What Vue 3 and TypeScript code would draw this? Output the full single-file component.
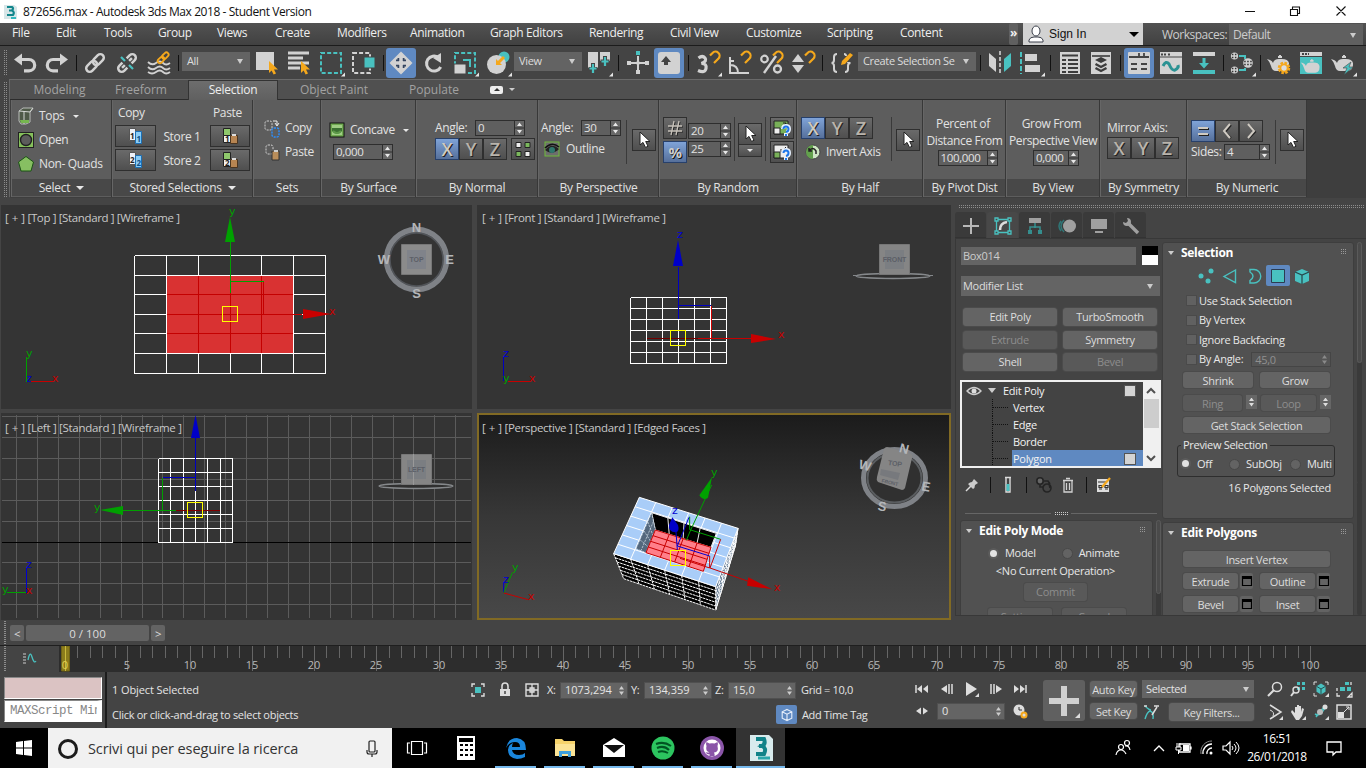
<script setup lang="ts">
import { h } from 'vue'

const G = '#d2d2d2'
const T = '#49c1c0'
const Y = '#f5a81c'

const magnet = `<path d="M0-6.500L2.500-9a4 4 0 0 1 6 5.500L4 1" fill="none" stroke="${Y}" stroke-width="2.200"/>`
const pot = `<path d="M-12-4q5 1 6 4 1-4 6-4h3q6 0 7 4v2q0 5-5 6h-8q-4 0-5-5-1-4-4-7z" fill="${G}"/><path d="M-1-6h4M1-8v2" stroke="${G}" stroke-width="2"/>`
const corner = `<path d="M14 9.500V13.500H10z" fill="#e6e6e6"/>`
const cubeN = `<path d="M0-7L6-4V4L0 7-6 4V-4zM-6-4L0-1 6-4M0-1V7"/>`
const ball = (x: number, y: number, r: number) => `<circle cx="${x}" cy="${y}" r="${r}" fill="${G}"/><path d="M${x - r + 1} ${y - 1.500}h${2 * r - 2}M${x - r + 1} ${y + 1.500}h${2 * r - 2}" stroke="#333" stroke-width="1.500" stroke-dasharray="1.500 1.500"/>`

const icons: Record<string, string> = {
  app: `<path d="M-6-7h10l3 2V7H-6z" fill="#d7e6e8"/><path d="M-3-5h5q2 1 0 3.500Q5 0 3 3H-3M-1-1.500h3" fill="none" stroke="#12868c" stroke-width="2.200"/><path d="M1 6h5" stroke="#35b9bd" stroke-width="2"/>`,
  undo: `<path d="M-5-3.500H4a5.700 5.700 0 0 1 0 11.400H-1" fill="none" stroke="${G}" stroke-width="3.200"/><path d="M-11-3.500L-3-9.500V2.500z" fill="${G}"/>`,
  redo: `<path d="M5-3.500H-4a5.700 5.700 0 0 0 0 11.400H1" fill="none" stroke="${G}" stroke-width="3.200"/><path d="M11-3.500L3-9.500V2.500z" fill="${G}"/>`,
  link: `<g transform="rotate(-45)" fill="none" stroke="${G}" stroke-width="2.500"><rect x="-11" y="-3.500" width="12.500" height="7" rx="3.500"/><rect x="-1.500" y="-3.500" width="12.500" height="7" rx="3.500"/></g>`,
  unlink: `<g transform="rotate(-45)" fill="none" stroke="${G}" stroke-width="2.500"><path d="M-3-3.500h-4.500a3.500 3.500 0 0 0 0 7H-3M3-3.500h4.500a3.500 3.500 0 0 1 0 7H3M-3 0H-7M3 0H7"/></g><path d="M-6-6l4 4M2 2l4 4" stroke="${T}" stroke-width="2.200"/>`,
  bind: `<path d="M-11-1q4 4 8 1t7 0 7 0M-11 4q4 4 8 1t7 0 7 0M-11 9q4 3 8 0t7 0 7 0" fill="none" stroke="${G}" stroke-width="1.800"/><g transform="translate(4 -5) rotate(-45)" fill="none" stroke="${Y}" stroke-width="1.800"><rect x="-6.500" y="-2.200" width="7.500" height="4.400" rx="2.200"/><rect x="-.5" y="-2.200" width="7.500" height="4.400" rx="2.200"/></g>`,
  select: `<path d="M-10-11H8V7H-10z" fill="${G}"/><path d="M3-2V10l2.600-2.400 2 4 2.400-1.200-2-3.800H12z" fill="${Y}"/>`,
  byname: `<path d="M-10-10H11M-10-5H5M-10 0H11M-10 5H2" stroke="${G}" stroke-width="3"/><path d="M3-2V10l2.600-2.400 2 4 2.400-1.200-2-3.800H12z" fill="${Y}"/>`,
  rect: `<rect x="-10" y="-10" width="20" height="20" fill="none" stroke="${T}" stroke-width="2" stroke-dasharray="4 2.150"/>${corner}`,
  window: `<rect x="-11" y="-10" width="17" height="20" fill="none" stroke="${G}" stroke-width="2" stroke-dasharray="4 2.100"/><path d="M0-6H11V5H0z" fill="${T}" stroke="#444"/>`,
  move: `<path d="M0-11.500L11.500 0 0 11.500-11.500 0z" fill="${G}"/><path d="M-3.500-3.500h2M-3.500-3.500v2M3.500-3.500h-2M3.500-3.500v2M-3.500 3.500h2M-3.500 3.500v-2M3.500 3.500h-2M3.500 3.500v-2" stroke="#33445f" stroke-width="3"/><path d="M0-10V10M-10 0H10" stroke="${G}" stroke-width="3"/>`,
  rotate: `<path d="M5.500-5.500A7.500 7.500 0 1 0 7.700 4" fill="none" stroke="${G}" stroke-width="3"/><path d="M0-5L8-10V0z" fill="${G}"/>`,
  scale: `<rect x="-10" y="-10" width="20" height="20" fill="none" stroke="${T}" stroke-width="2" stroke-dasharray="4 2.150"/><path d="M-11 1H1V11H-11z" fill="${G}" stroke="#444"/><path d="M-2-3H5V4" fill="none" stroke="${T}" stroke-width="2"/>${corner}`,
  place: `<circle cx="6" cy="-6" r="5.500" fill="${T}"/><circle cx="-1.500" cy="1.500" r="9.500" fill="${G}"/><path d="M6-6L0 0" stroke="${Y}" stroke-width="3"/><path d="M-2 2v-6l6 6z" fill="${Y}"/>${corner}`,
  pivot: `<path d="M-11-11H-1V5H-11zM1-11H11V-2H1z" fill="${G}"/><path d="M-6 0V11M-10.500 6H-1.500M6-7V4M1.500-1.500H10.500" stroke="#444" stroke-width="4"/><path d="M-6 1V10M-9.500 5.500H-2.500M6-6V3M2.500-1.500H9.500" stroke="${T}" stroke-width="2.200"/>${corner}`,
  manip: `<path d="M-2-12H2V-8H-2z" fill="${T}"/><path d="M0-7V11M-11 0H11" stroke="${G}" stroke-width="2"/><path d="M-11-2h4v4h-4zM7-2h4v4H7zM-2 7H2v4H-2zM-1.500-1.500h3v3h-3z" fill="${G}"/>`,
  keyb: `<rect x="-11" y="-11" width="22" height="22" rx="3" fill="${G}"/><path d="M-3-7L2-1H-1V2H-5V-1H-8z" fill="#444"/>`,
  snap: `<path d="M-9.500-5Q-5.500-8-3-5T-6.500.500Q-1 .500-2 5.500T-10 7.500" fill="none" stroke="${G}" stroke-width="3.200"/><g transform="translate(2 -1)">${magnet}</g>${corner}`,
  angle: `<path d="M-9-6V10H10M-9 2Q-1 2-1 10" fill="none" stroke="${G}" stroke-width="2"/><path d="M-9-2H-5" stroke="${G}" stroke-width="2"/><g transform="translate(2 -1)">${magnet}</g>`,
  percent: `<path d="M-7 10L5-7" stroke="${G}" stroke-width="2.400"/><circle cx="-6.500" cy="-4" r="3.300" fill="none" stroke="${G}" stroke-width="2.200"/><circle cx="6.500" cy="6" r="3.500" fill="none" stroke="${G}" stroke-width="2.300"/><g transform="translate(2 -1)">${magnet}</g>`,
  spinner: `<path d="M-11-1L-5-9 1-1zM-11 2H1L-5 10z" fill="${G}"/><g transform="translate(2 -1)">${magnet}</g>`,
  braces: `<path d="M-5-9q-3 0-3 3v3q0 3-2.500 3Q-8 0-8 3v3q0 3 3 3M2-9q2 0 2 2M6-1q0 1 2.500 1Q6 0 6 3v3q0 3-3 3" fill="none" stroke="${G}" stroke-width="2"/><path d="M-1 2L0-2 8-10l3 2-8 9z" fill="${Y}"/>`,
  mirror: `<path d="M-11-10L-4-4V9L-11 3z" fill="${G}"/><path d="M11-10L4-4V9L11 3z" fill="${T}"/><path d="M0-12V12" stroke="${G}" stroke-width="1.600" stroke-dasharray="4 2"/>`,
  align: `<path d="M-10-11V11" stroke="${T}" stroke-width="2" stroke-dasharray="5 2"/><path d="M-6-9H6V-2H-6zM-6 2H9V9H-6z" fill="${G}"/>${corner}`,
  layer: `<path d="M-10-11H10V11H-10z" fill="${G}"/><path d="M-8-7.500H8M-8-3h4M-2-3h10M-8 1h4M-2 1h10M-8 5h4M-2 5h10M-8 9h4M-2 9h10" stroke="#3c3c3c" stroke-width="1.800"/>`,
  stack: `<path d="M-10-11H10V11H-10z" fill="${G}"/><path d="M-9-7H9" stroke="#3c3c3c" stroke-width="1.600"/><path d="M0-6L6-3 0 0-6-3z" fill="#3c3c3c"/><path d="M-5.500 1L0 4 5.500 1M-5.500 5L0 8 5.500 5" fill="none" stroke="#3c3c3c" stroke-width="2.400"/>`,
  ribbon: `<rect x="-11" y="-11" width="22" height="22" rx="1" fill="${G}"/><path d="M-10-6H0V-10M5-10v4M0-6H10M-8 1h6M2 1h6M-8 6h6M2 6h6" fill="none" stroke="#444" stroke-width="1.800"/>`,
  curve: `<path d="M-11-11H11V11H-11z" fill="${G}"/><path d="M-10-8.500h6M-3-8.500h3" stroke="#444" stroke-width="2" stroke-dasharray="2 1"/><path d="M-11-6H11" stroke="#444"/><path d="M-8 3q3-6 6-2 3 7 6 6 4-2 3-5" fill="none" stroke="#2b9293" stroke-width="3"/>`,
  schem: `<path d="M-11-11H11V-7H-11z" fill="${G}"/><path d="M-11 7H11V11H-11z" fill="${T}"/><path d="M-1.500-5h3V0H5L0 5.500-5 0h3.500z" fill="${T}"/>`,
  material: `${ball(-7.5, -7, 3.600)}${ball(-7.5, 7, 3.600)}${ball(6, 0, 4.800)}<path d="M-3-7H3V-4M-3 7H3V5" fill="none" stroke="${T}" stroke-width="2"/>${corner}`,
  rsetup: `${pot}<circle cx="5" cy="5" r="5" fill="none" stroke="${Y}" stroke-width="2.500" stroke-dasharray="2.500 1.400"/><circle cx="5" cy="5" r="3.600" fill="#ddd" stroke="${Y}" stroke-width="1.800"/>`,
  rframe: `<path d="M-11-11H11V-7H-11z" fill="${G}"/><path d="M-9-9h7" stroke="#444" stroke-width="2" stroke-dasharray="2 1"/><path d="M-11-6H11V11H-11z" fill="${T}"/><g transform="translate(0 3) scale(.85)">${pot}</g>`,
  render: `${pot}<path d="M8-1L0 5H4L1 12 10 4H6z" fill="${T}" stroke="#444" stroke-width=".6"/>${corner}`,
  cube: `<path d="M-7-5L-3-8H7L4-4V6L0 8H-5L-7 5z" fill="#4f5a48" stroke="#b9bcb9"/><path d="M-7-5L4-4 7-8M-2-5V8" fill="none" stroke="#d4d7d4"/><path d="M-6 4h9v3h-8z" fill="#76b64f"/>`,
  open: `<rect x="-7.500" y="-7.500" width="15" height="15" fill="#86c05c" stroke="#222"/><circle r="5.500" fill="#5c5c5c" stroke="#222" stroke-width="1.400"/>`,
  penta: `<path d="M0-7.500L7.500-2 5 7H-5L-7.500-2z" fill="#87bf62" stroke="#1b5415"/>`,
  sets: `<rect x="-6" y="-7" width="7" height="9" rx="2" fill="none" stroke="#cfcfcf" stroke-dasharray="2 1"/><rect x="1" y="0" width="7" height="9" rx="2" fill="none" stroke="#2b8fff" stroke-width="1.400" stroke-dasharray="2 1"/><path d="M2-7h4v4M4-5l2 3 2-3" fill="none" stroke="#eee"/>`,
  setp: `<rect x="-5" y="-7" width="7" height="9" rx="2" fill="none" stroke="#cfcfcf" stroke-dasharray="2 1"/><path d="M1-1H8V8H1z" fill="#b98d5a" stroke="#333"/><path d="M3-2h4v2H3z" fill="#ccc"/>`,
  concave: `<rect x="-7" y="-7" width="14" height="14" fill="#6faa50" stroke="#111"/><rect x="-5" y="-5" width="10" height="10" fill="#9fce84"/><path d="M-5-2H5V1Q3 4 0 4T-5 1z" fill="#3c7132"/><path d="M-4 1Q0 5 4 1" fill="none" stroke="#5d9a49" stroke-width="2"/>`,
  eye: `<rect x="-7" y="-7" width="14" height="14" fill="#6d6d6d" stroke="#6fbb3b"/><path d="M-7 1Q0-7 7 0 0 7-7 1" fill="#222"/><circle r="3" cy="1" fill="#2f776d"/><path d="M-7-1Q0-8 7-2" fill="none" stroke="#111" stroke-width="1.500"/>`,
  cursor: `<path d="M-4-8V5l3-2.600 2.500 5L4 6.300 1.700 1.500H6z" fill="#fff" stroke="#222"/>`,
  four: `<g stroke="#222"><path d="M-7-6.500h5v5h-5zM2 2.500h5v5H2z" fill="#eee"/><path d="M2-6.500h5v5H2zM-7 2.500h5v5h-5z" fill="#7bb75d"/></g>`,
  rnd1: `<path d="M-8-7H6V6H-8z" fill="#78b058" stroke="#222"/><path d="M-8 0h6v6h-6z" fill="#eee" stroke="#222"/><path d="M-1 0L4-5M1-5h3v3" stroke="#222" fill="none"/><path d="M1 1q0-3 3-3t3 3-3 3M4 5v3" stroke="#e8f2ff" stroke-width="4" fill="none"/><path d="M1.500 1q0-2.500 2.500-2.500t2.500 2.500-2.500 3M4 6v2" stroke="#1f77e8" stroke-width="2" fill="none"/>`,
  rnd2: `<path d="M-8-7H6V6H-8z" fill="#eee" stroke="#222"/><path d="M-8 0h6v6h-6z" fill="#78b058" stroke="#222"/><path d="M4-5L-1 0M-1-3v3h3" stroke="#222" fill="none"/><path d="M1 1q0-3 3-3t3 3-3 3M4 5v3" stroke="#e8f2ff" stroke-width="4" fill="none"/><path d="M1.500 1q0-2.500 2.500-2.500t2.500 2.500-2.500 3M4 6v2" stroke="#1f77e8" stroke-width="2" fill="none"/>`,
  invert: `<circle r="7" fill="#cfe6c4" stroke="#444"/><path d="M0-7A7 7 0 0 0 0 7z" fill="#62a04c"/><path d="M-4-1q4-5 7 0v3M-4-4v3h3" fill="none" stroke="#222" stroke-width="1.500"/>`,
  hash: `<path d="M-1-7L-4 7M4-7L1 7M-7-2H7M-7 3H7" stroke="#222" transform="translate(1 1)" fill="none"/><path d="M-1-7L-4 7M4-7L1 7M-7-2H7M-7 3H7" stroke="#c6c1b9" stroke-width="1.300" fill="none"/>`,
  eq: `<path d="M-5-3H5M-5 3H5" stroke="#222" stroke-width="2" transform="translate(1 1)"/><path d="M-5-3H5M-5 3H5" stroke="#cfcac2" stroke-width="2"/>`,
  lt: `<path d="M4-6L-2 1l6 6" stroke="#222" stroke-width="2" fill="none"/><path d="M3-7L-3 0l6 7" stroke="#cfcac2" stroke-width="2" fill="none"/>`,
  gt: `<path d="M-2-6L4 1l-6 6" stroke="#222" stroke-width="2" fill="none"/><path d="M-3-7L3 0l-6 7" stroke="#cfcac2" stroke-width="2" fill="none"/>`,
  plus: `<path d="M0-8V8M-8 0H8" stroke="#b8b8b8" stroke-width="2"/>`,
  modify: `<g fill="none" stroke="${T}" stroke-width="1.300"><path d="M-8-8h3v3h-3zM5-8h3v3H5zM-8 5h3v3h-3zM5 5h3v3H5zM-5-6.500H5M-6.500-5V5M-5 6.500H5M6.500-5V5"/></g><path d="M-3 4Q-3-3 4-4" fill="none" stroke="#ddd" stroke-width="2.600"/>`,
  hier: `<path d="M-6-8H6V-3H-6z" fill="#a0a0a0"/><path d="M0-3V1M-5 5V1H5V5" fill="none" stroke="#358e8e" stroke-width="1.500"/><path d="M-7 4h4v4h-4zM3 4h4v4H3zM-1 0h2v2h-2z" fill="#358e8e"/>`,
  motion: `<circle cx="2.500" r="6.500" fill="#a0a0a0"/><path d="M-3-6q-6 6 0 12M-6-5q-4 5 0 10" fill="none" stroke="#2f7676" stroke-width="1.500"/>`,
  display: `<path d="M-8-7H8V3H-8zM-4 5H4V7H-4z" fill="#a0a0a0"/>`,
  utils: `<path d="M-2-2L7 7" stroke="#a0a0a0" stroke-width="3.400"/><path d="M-4-8a4 4 0 1 1-4 4l3 1 2-2z" fill="#a0a0a0"/>`,
  vtx: `<g fill="${T}"><circle cx="-5" r="2.500"/><circle cx="5" cy="-5" r="2.500"/><circle cx="2" cy="5" r="2.500"/></g>`,
  edge: `<path d="M5.500-6L-6 0.500 5.500 6.500z" fill="none" stroke="${T}" stroke-width="1.400"/>`,
  border: `<path d="M-4-6.500H0A6 6 0 0 1 0 7H-4V4.500Q2 0-4-4z" fill="none" stroke="${T}" stroke-width="1.400"/>`,
  poly: `<path d="M-6.500-6.500h13v13h-13z" fill="${T}" stroke="#2b3c52"/>`,
  element: `<path d="M0-7L7-4V5L0 8-7 5V-4z" fill="${T}"/><path d="M-7-4L0-1 7-4M0-1V8" stroke="#27474a" stroke-width="1.200" fill="none"/>`,
  eyes: `<path d="M-7 0Q0-7 7 0 0 7-7 0z" fill="none" stroke="#ccc" stroke-width="1.400"/><circle r="2.500" fill="#ddd"/>`,
  pin: `<path d="M-6 6L0 0" stroke="#ddd" stroke-width="1.400"/><path d="M2-6L6-2 3 0Q3 3 1 4L-4-1Q-2-3 0-3z" fill="#ccc"/>`,
  tube: `<path d="M-3-7.500H3M-2-7V7H2V-7" fill="none" stroke="#ddd" stroke-width="1.400"/><path d="M-1.500-1h3v7h-3z" fill="${T}"/>`,
  unique: `<g fill="none" stroke="#242424" stroke-width="1.600"><circle cx="-4" cy="-4" r="3.200" fill="#666"/><path d="M0-4H4l2 3M-4 0v2h3"/><circle cx="3" cy="3" r="4"/><path d="M5-2l1 5"/></g>`,
  trash: `<path d="M-5-4.500H5M-2-6.500H2M-4-4V7H4V-4M-1.500-2V5M1.500-2V5" fill="none" stroke="#d2d2d2" stroke-width="1.300"/>`,
  config: `<path d="M-7-6H5V7H-7z" fill="#ddd"/><path d="M-6-3h8M-5 .500h3v2h-3zM1 .500h3v2H1zM-5 4h3M1 4h3" fill="none" stroke="#333" stroke-width="1.200"/><path d="M-2 2L6-7" stroke="${Y}" stroke-width="2.200"/>`,
  mini: `<path d="M-4.500-4.500H4.500V4.500H-4.500z" fill="none" stroke="#000" stroke-width="1.200"/><path d="M-5-5H5V-2H-5z" fill="#000"/>`,
  isolate: `<path d="M-6-3V-6H-3M3-6H6V-3M6 3V6H3M-3 6H-6V3" fill="none" stroke="#ddd" stroke-width="1.400"/><path d="M-3-3H3V3H-3z" fill="${T}"/>`,
  lock: `<path d="M-5-1H5V6H-5z" fill="#ddd"/><path d="M-3-1V-4a3 3 0 0 1 6 0v3" fill="none" stroke="#ddd" stroke-width="1.600"/><path d="M0 1v3" stroke="#444" stroke-width="1.500"/>`,
  xform: `<path d="M-6-6H6V6H-6z" fill="none" stroke="#ddd" stroke-width="1.400"/><path d="M0-6V6M-6 0H6M-2-2h4v4h-4z" fill="none" stroke="#ddd" stroke-width="1.300"/>`,
  tag: `<g fill="none" stroke="#e6eefb" stroke-width="1.400" transform="scale(.8)">${cubeN}</g>`,
  pfirst: `<path d="M-6-4V4" stroke="#ddd" stroke-width="1.500"/><path d="M-5 0L0-4V4zM1 0L6-4V4z" fill="#ddd"/>`,
  pprev: `<path d="M-6 0L0-4V4z" fill="#ddd"/><path d="M2-5V5M5-5V5" stroke="#ddd" stroke-width="1.500"/>`,
  play: `<path d="M-5-7L6 0-5 7z" fill="#ddd"/><path d="M8 4v4H4z" fill="#ddd"/>`,
  pnext: `<path d="M6 0L0-4V4z" fill="#ddd"/><path d="M-5-5V5M-2-5V5" stroke="#ddd" stroke-width="1.500"/>`,
  plast: `<path d="M6-4V4" stroke="#ddd" stroke-width="1.500"/><path d="M5 0L0-4V4zM-1 0L-6-4V4z" fill="#ddd"/>`,
  keymode: `<path d="M-6 0L-1-3.500V3.500zM6 0L1-3.500V3.500z" fill="#ddd"/>`,
  timecfg: `<circle cx="-1" cy="-1" r="5.500" fill="#ddd"/><path d="M-1-4V-1H2" stroke="#333" fill="none"/><circle cx="4" cy="4" r="2.500" fill="#ddd" stroke="${Y}" stroke-width="2"/>`,
  bigkey: `<path d="M0-15V15M-15 0H15" stroke="#d0d0d0" stroke-width="6"/><path d="M16 12v5H11z" fill="#ddd"/>`,
  figure: `<path d="M-6 7Q-4 0-1-1Q3 0 2 7M-6-6Q-2-2 0-2" fill="none" stroke="${T}" stroke-width="1.400"/><path d="M1 3L6-5M3-6h5M-7-6h3" stroke="#ddd" stroke-width="1.500"/>`,
  zoom: `<circle cx="2" cy="-2" r="4.500" fill="none" stroke="#ddd" stroke-width="1.500"/><path d="M-1 1L-7 7" stroke="#ddd" stroke-width="2.200"/>`,
  zoomall: `<path d="M-1-7h3v3h-3zM4-7h3v3H4zM-1-2h3v3h-3zM4-2h3v3H4z" fill="${T}"/><circle cx="-2" cy="1" r="3" fill="none" stroke="#ddd" stroke-width="1.400"/><path d="M-4 3l-3 4" stroke="#ddd" stroke-width="2"/>`,
  extents: `<g transform="scale(.9)"><path d="M0-6L5-3V3L0 6-5 3V-3z" fill="${T}"/><path d="M-5-3L0 0 5-3M0 0V6" fill="none" stroke="#244"/></g><path d="M-7-4V-7H-4M4-7H7V-4M-7 4V7H-4" fill="none" stroke="#ddd"/><path d="M8 4v4H4z" fill="#ddd"/>`,
  extall: `<path d="M1-7h4v3H1zM-4-2h5v4h-5zM3-2h4v4H3z" fill="${T}"/><path d="M-7-1V2M-7 4V7H-4M7-7V-4M8 4v4H4z" fill="none" stroke="#ddd" stroke-width="1.300"/>`,
  fov: `<path d="M-5-7L6 0-5 7" fill="none" stroke="#ddd" stroke-width="1.500"/><path d="M-5-2Q0 0-2 4" fill="none" stroke="#ddd"/><path d="M8 4v4H4z" fill="#ddd"/>`,
  hand: `<path d="M-6-2L-3 1V-5h2v5-7h2v7-6h2v6l1-4 2 1-2 7-3 4h-3L-7 0z" fill="#ddd"/><path d="M8 4v4H4z" fill="#ddd"/>`,
  orbit: `<path d="M-5 5L3-5M-6 2q5 3 10-6" fill="none" stroke="${T}" stroke-width="1.500"/><circle cx="-1" r="3" fill="#bbb"/><circle cx="4" cy="-5" r="2.500" fill="#ddd"/><path d="M8 4v4H4z" fill="#ddd"/>`,
  maxi: `<path d="M-7-7H7V7H-7z" fill="none" stroke="#ddd" stroke-width="1.500"/><path d="M-6 0H0V6H-6z" fill="#ddd"/><path d="M0 0L5-5M2-5h3v3" fill="none" stroke="#ddd"/>`,
  trackc: `<path d="M-7-5h3M-7-2h3M-7 1h3M-7 4h3" stroke="#ccc"/><path d="M-2 1q2-10 4-3t4 4" fill="none" stroke="${T}" stroke-width="1.300"/>`,
  win: `<path d="M-8-6L-1-7V-.600H-8zM0-7L8-8V-.600H0zM-8 .5H-1V7L-8 6zM0 .5H8V8L0 7z" fill="#fff"/>`,
  cortana: `<circle r="8.500" fill="none" stroke="#1c1c1c" stroke-width="3"/>`,
  mic: `<rect x="-3" y="-8" width="6" height="11" rx="1" fill="none" stroke="#222" stroke-width="1.200"/><path d="M-5 1V3q0 2 2 2H3q2 0 2-2V1M0 5V8" fill="none" stroke="#222" stroke-width="1.200"/>`,
  task: `<path d="M-5.500-6.500h11v13h-11zM-7-5h-2.500V5H-7M7-5h2.500V5H7" fill="none" stroke="#fff" stroke-width="1.200"/>`,
  calc: `<path d="M-9-12H9V12H-9z" fill="#fff"/><path d="M-7-10H7V-6H-7z" fill="#000"/><path d="M-6-3h3M-1-3h3M4-3h3M-6 2h3M-1 2h3M4 2h3M-6 7h3M-1 7h3M4 7h3" stroke="#000" stroke-width="2.200"/>`,
  edgeb: `<path d="M-10 0Q-8-10 1-10 10-9 10 2H-4Q-3 7 3 7 7 7 9 5V9Q5 11 1 11-8 10-8 2-8-3-3-5-4-3-4-1H4Q4-6-1-6-7-6-10 0z" fill="#1a86dc"/>`,
  explorer: `<path d="M-10-9H-3L-1-7H10V8H-10z" fill="#f6d36b"/><path d="M-10-4H10V8H-10z" fill="#fbe395"/><path d="M-6 9V3H6V9H3V6H-3V9z" fill="#3ea0dd"/>`,
  mail: `<path d="M-11-3L0-10 11-3V9H-11z" fill="#fff"/><path d="M-10-3H10L0 5z" fill="#111"/>`,
  spotify: `<circle r="11.500" fill="#2cc45f"/><path d="M-7-4Q1-7 8-2M-6 0Q1-3 6 2M-5 4Q0 2 5 5" fill="none" stroke="#052" stroke-width="2"/>`,
  github: `<circle r="12" fill="#8a55a8"/><circle r="8.500" fill="#fff"/><path d="M-5.500-6L-2.500-4.500Q0-5 2.500-4.500L5.500-6Q6.500-3.500 5.500-2 7 4 2 4.500 3 6 2.500 8H-2.500V6Q-5 7-6.500 4-4 5-2.500 4.300-7 3.500-5.500-2-6.500-4-5.500-6z" fill="#8a55a8"/>`,
  max: `<path d="M-11-13H8L12-9V13H-11z" fill="#d8ebed"/><path d="M-5-9H3Q5-4 1-2 6 0 3 6H-5M-2-2H2" fill="none" stroke="#118288" stroke-width="4"/><path d="M-3 10H9" stroke="#2aa7ab" stroke-width="3"/>`,
  people: `<g fill="none" stroke="#fff" stroke-width="1.200"><circle cx="-2" cy="-1" r="2.500"/><path d="M-7 7q1-5 5-5 3 0 5 4"/><circle cx="4" cy="-5" r="2.500"/><path d="M2-2q4-1 5 4"/></g>`,
  chev: `<path d="M-5 3L0-2 5 3" fill="none" stroke="#fff" stroke-width="1.300"/>`,
  batt: `<path d="M-4-4H7V4H-4zM8-1.500v3" fill="none" stroke="#fff" stroke-width="1.300"/><path d="M0-3h6v6H0z" fill="#fff"/><path d="M-6-5v4M-3-5v4M-7-1h5v3h-5zM-4.500 2v4" stroke="#fff" fill="#000"/>`,
  wifi: `<path d="M-4 6A9 9 0 0 1 5-4M0 6A5 5 0 0 1 5 0" fill="none" stroke="#fff" stroke-width="1.300"/><path d="M-6 6A11 11 0 0 1 5-7" fill="none" stroke="#888"/><circle cx="4" cy="5" r="1.500" fill="#fff"/>`,
  vol: `<path d="M-7-2h3l4-4V6L-4 2h-3z" fill="none" stroke="#fff" stroke-width="1.200"/><path d="M2-2q2 2 0 4M4-4q4 4 0 8M6-6q6 6 0 12" fill="none" stroke="#fff"/>`,
  notif: `<path d="M-7-6H7V4H2L-1 7V4H-7z" fill="none" stroke="#fff" stroke-width="1.300"/>`,
  user: `<ellipse cy="-3" rx="4" ry="5" fill="#fff" stroke="#3a3f4a"/><path d="M-7 8V6q1-3 5-3h4q4 0 5 3v2z" fill="#fff" stroke="#3a3f4a"/>`,
}

const Ic = (p: { n: string; s?: number | string }) => {
  const s = Number(p.s ?? 32)
  return h('svg', { class: 'ic', width: s, height: s, viewBox: `${-s / 2} ${-s / 2} ${s} ${s}`, innerHTML: icons[p.n] })
}
const Spin = (p: { v: string }) =>
  h('span', { class: 'spin' }, [
    h('span', { class: 'val' }, p.v),
    h('svg', { width: 11, height: 16, viewBox: '0 0 11 16', innerHTML: '<path d="M0 0H11V16H0z" fill="#2e2e2e"/><path d="M1 1H10V7.500H1zM1 8.500H10V15H1z" fill="#686868"/><path d="M5.500 2.500L8 6H3zM3 10H8L5.500 13.500z" fill="#e8e8e8"/>' }),
  ])
const Axis = (p: { on?: boolean }) =>
  h('span', { class: 'axes' }, ['X', 'Y', 'Z'].map((a, i) => h('b', { class: p.on && i === 0 ? 'on' : '' }, a)))

interface Tool { k: string; w: number; t?: string }
const tools: Tool[] = [
  { k: 'undo', w: 32 }, { k: 'redo', w: 32 }, { k: 'sep', w: 6 }, { k: 'link', w: 32 }, { k: 'unlink', w: 32 }, { k: 'bind', w: 32 },
  { k: 'sep', w: 7 }, { k: 'dd', w: 68, t: 'All' }, { k: 'select', w: 32 }, { k: 'byname', w: 32 }, { k: 'rect', w: 33 }, { k: 'window', w: 33 },
  { k: 'sep', w: 6 }, { k: 'on:move', w: 30 }, { k: 'rotate', w: 33 }, { k: 'scale', w: 32 }, { k: 'place', w: 33 }, { k: 'dd', w: 68, t: 'View' },
  { k: 'pivot', w: 33 }, { k: 'sep', w: 7 }, { k: 'manip', w: 32 }, { k: 'on:keyb', w: 30 }, { k: 'sep', w: 8 }, { k: 'snap', w: 31 },
  { k: 'angle', w: 31 }, { k: 'percent', w: 33 }, { k: 'spinner', w: 32 }, { k: 'sep', w: 7 }, { k: 'braces', w: 32 },
  { k: 'dd', w: 118, t: 'Create Selection Se' }, { k: 'sep', w: 8 }, { k: 'mirror', w: 31 }, { k: 'align', w: 32 }, { k: 'sep', w: 7 },
  { k: 'layer', w: 31 }, { k: 'stack', w: 32 }, { k: 'sep', w: 7 }, { k: 'on:ribbon', w: 30 }, { k: 'curve', w: 33 }, { k: 'schem', w: 33 },
  { k: 'sep', w: 6 }, { k: 'material', w: 32 }, { k: 'sep', w: 5 }, { k: 'rsetup', w: 32 }, { k: 'rframe', w: 32 }, { k: 'render', w: 32 },
]
const menus: [string, number][] = [['File', 44], ['Edit', 48], ['Tools', 54], ['Group', 59], ['Views', 58], ['Create', 62], ['Modifiers', 73], ['Animation', 80], ['Graph Editors', 99], ['Rendering', 81], ['Civil View', 76], ['Customize', 81], ['Scripting', 73], ['Content', 60]]

type P = [number, number]
const lerp = (a: P, b: P, t: number): P => [a[0] + (b[0] - a[0]) * t, a[1] + (b[1] - a[1]) * t]
const mesh = (a: P, b: P, c: P, d: P, nu: number, nv: number): string => {
  let s = ''
  for (let i = 0; i <= nu; i++) s += `M${lerp(a, b, i / nu)}L${lerp(d, c, i / nu)}`
  for (let j = 0; j <= nv; j++) s += `M${lerp(a, d, j / nv)}L${lerp(b, c, j / nv)}`
  return s
}
const topMesh = mesh([493, 262], [789, 355], [722, 530], [416, 431], 6, 6)
const frontMesh = mesh([416, 431], [722, 530], [722, 600], [446, 506], 6, 6)
const sideMesh = mesh([722, 530], [789, 355], [781, 408], [722, 600], 6, 4)
const backMesh = mesh([530, 308], [724, 370], [708, 412], [541, 360], 4, 1)
const leftMesh = mesh([530, 308], [541, 360], [513, 428], [483, 416], 2, 4)
const floorMesh = mesh([541, 360], [708, 412], [685, 484], [513, 428], 4, 4)
const lines = (xs: number[], ys: number[]) =>
  xs.map(x => `M${x} ${ys[0]}V${ys[ys.length - 1]}`).join('') + ys.map(y => `M${xs[0]} ${y}H${xs[xs.length - 1]}`).join('')
const topGrid = lines([134.5, 166.5, 198.5, 230.5, 261.5, 293.5, 325.5], [255.5, 275.5, 294.5, 314.5, 333.5, 353.5, 373.5])
const frontGrid = lines([630.5, 646.5, 662.5, 678.5, 694.5, 710.5, 726.5], [297.5, 308.5, 319.5, 330.5, 341.5, 352.5, 363.5])
const leftGrid = lines([158.5, 170.5, 183.5, 195.5, 207.5, 220.5, 232.5], [458.5, 472.5, 486.5, 500.5, 514.5, 528.5, 542.5])
const worldX = Array.from({ length: 22 }, (_, i) => Math.floor(16.500 + i * 20.920) + 0.5)
const worldY = [416.5, 437.5, 458.5, 479.5, 500.5, 521.5, 562.5, 583.5, 604.5]
const ticks = Array.from({ length: 101 }, (_, i) => i)
const tx = (i: number) => Math.round(65 + i * 12.450) + 0.5
</script>

<template>
  <div class="app">
    <header class="title"><Ic n="app" s="16" /><span>872656.max - Autodesk 3ds Max 2018 - Student Version</span>
      <svg class="winbtn" width="110" height="22" viewBox="1240 0 110 22"><path d="M1245 10.500h10M1290.500 8.500h7v6h-7zM1292.500 8v-2h7v6.500h-2M1336.500 5.500l9 9M1345.500 5.500l-9 9" fill="none" stroke="#111" stroke-width="1.100" /></svg>
    </header>

    <nav class="menu">
      <span v-for="m in menus" :key="m[0]" :style="{ width: m[1] + 'px' }">{{ m[0] }}</span>
      <b class="more">»</b>
      <div class="sign"><Ic n="user" s="18" /><span>Sign In</span><i class="tri dark"></i></div>
      <label>Workspaces:</label>
      <div class="ws">Default<i class="tri"></i></div>
    </nav>

    <div class="toolbar">
      <i class="grip"></i>
      <div v-for="(t, i) in tools" :key="i" class="cell" :class="{ on: t.k.startsWith('on:') }" :style="{ width: t.w + 'px' }">
        <i v-if="t.k === 'sep'" class="sep"></i>
        <span v-else-if="t.k === 'dd'" class="dd">{{ t.t }}<i class="tri"></i></span>
        <Ic v-else :n="t.k.replace('on:', '')" />
      </div>
    </div>

    <section class="ribbon">
      <i class="grip tall"></i>
      <div class="rmain">
        <div class="tabs"><span class="t1">Modeling</span><span class="t2">Freeform</span><span class="t3">Selection</span><span class="t4">Object Paint</span><span class="t5">Populate</span><i class="collapse"><i></i></i><i class="tri sm"></i></div>
        <div class="groups">
          <div class="grp g1"><div class="body rows">
            <p><Ic n="cube" s="20" /><span>Tops</span><i class="tri sm lt"></i></p><p><Ic n="open" s="20" /><span>Open</span></p><p><Ic n="penta" s="20" /><span>Non- Quads</span></p>
          </div><footer>Select <i class="tri big"></i></footer></div>
          <div class="grp g2"><div class="body store">
            <span>Copy</span><span></span><span class="pl">Paste</span>
            <template v-for="k in 2" :key="k">
              <b class="btn"><svg width="20" height="18" viewBox="0 0 20 18"><path d="M3.500 1.500h6v12h-6z" fill="#eef1f8" stroke="#555" /><path d="M9.500 4.500h6v12h-6z" fill="#8bcdf7" stroke="#1d6fb3" /><text x="4" y="12" font-size="8" font-weight="700" fill="#222">{{ k }}</text><text x="10.500" y="15" font-size="8" font-weight="700" fill="#114f86">{{ k }}</text></svg></b>
              <em>Store {{ k }}</em>
              <b class="btn r"><svg width="20" height="18" viewBox="0 0 20 18"><path d="M3.500 1.500h7v7h-7z" fill="#8fc86c" stroke="#222" /><path d="M3.500 8.500h7v7h-7z" fill="#f2f2f2" stroke="#222" /><path d="M10.500 8.500h7v8h-7z" fill="#b78552" stroke="#4a3520" /><path d="M12 7h4v2h-4z" fill="#ddd" /><text x="5" y="15" font-size="8" font-weight="700" fill="#222">{{ k }}</text></svg></b>
            </template>
          </div><footer>Stored Selections <i class="tri big"></i></footer></div>
          <div class="grp g3"><div class="body rows"><p><Ic n="sets" s="20" /><span>Copy</span></p><p><Ic n="setp" s="20" /><span>Paste</span></p></div><footer>Sets</footer></div>
          <div class="grp g4"><div class="body rows"><p><Ic n="concave" s="16" /><span>Concave</span><i class="tri sm lt"></i></p><Spin v="0,000" class="s60" /></div><footer>By Surface</footer></div>
          <div class="grp g5"><div class="body rows"><p><span class="lab">Angle:</span><Spin v="0" class="s50" /></p><p><Axis :on="true" /><b class="btn sq"><Ic n="four" s="20" /></b></p></div><footer>By Normal</footer></div>
          <div class="grp g6"><div class="body cols"><div class="col"><p><span class="lab">Angle:</span><Spin v="30" class="s40" /></p><p><Ic n="eye" s="16" /><span class="out">Outline</span></p></div><i class="vs"></i><b class="btn sq cur"><Ic n="cursor" s="20" /></b></div><footer>By Perspective</footer></div>
          <div class="grp g7"><div class="body cols">
            <div class="pair"><b class="btn sq"><Ic n="hash" s="20" /></b><b class="btn sq blue pc">%</b></div>
            <div class="sp2"><Spin v="20" class="s43" /><Spin v="25" class="s43" /></div><i class="vs"></i>
            <div class="cdrop"><b class="btn sq"><Ic n="cursor" s="20" /></b><b class="btn sq half"><i class="tri sm lt"></i></b></div><i class="vs"></i>
            <div class="pair"><b class="btn sq"><Ic n="rnd1" s="20" /></b><b class="btn sq"><Ic n="rnd2" s="20" /></b></div>
          </div><footer>By Random</footer></div>
          <div class="grp g8"><div class="body cols"><div class="col"><Axis :on="true" /><p><Ic n="invert" s="18" /><span>Invert Axis</span></p></div><i class="vs"></i><b class="btn sq cur"><Ic n="cursor" s="20" /></b></div><footer>By Half</footer></div>
          <div class="grp g9"><div class="body mid"><span>Percent of</span><span>Distance From</span><Spin v="100,000" class="s60" /></div><footer>By Pivot Dist</footer></div>
          <div class="grp g10"><div class="body mid"><span>Grow From</span><span>Perspective View</span><Spin v="0,000" class="s46" /></div><footer>By View</footer></div>
          <div class="grp g11"><div class="body rows"><p>Mirror Axis:</p><Axis /></div><footer>By Symmetry</footer></div>
          <div class="grp g12"><div class="body cols"><div class="col"><p><b class="btn sq blue"><Ic n="eq" s="20" /></b><b class="btn sq"><Ic n="lt" s="20" /></b><b class="btn sq"><Ic n="gt" s="20" /></b></p><p><span class="sd">Sides:</span><Spin v="4" class="s46" /></p></div><i class="vs"></i><b class="btn sq cur"><Ic n="cursor" s="20" /></b></div><footer>By Numeric</footer></div>
        </div>
      </div>
    </section>

    <main class="work">
      <div class="views">
        <svg class="vp" width="471" height="204" viewBox="1 205 471 204">
          <g fill="none" stroke-width="1" shape-rendering="crispEdges"><path :d="topGrid" stroke="#fff" /><path d="M167 276H293V353H167z" fill="#d93232" stroke="none" /><path d="M198.500 276V353M230.500 276V353M261.500 276V353M263.500 281V314M167 294.500H293M167 314.500H302M167 333.500H293" stroke="#c40000" /><path d="M230.500 240V293M231 281.500H264" stroke="#00a000" /><path d="M222.500 306.500h15v15h-15z" stroke="#ff0" /></g>
          <path d="M230 217L225 242H235z" fill="#00a000" /><path d="M303 309L331 314 303 319z" fill="#c80000" />
          <g class="ax"><text x="229" y="215" fill="#00a000">y</text><text x="329" y="315" fill="#c80000">x</text><text x="26" y="357" fill="#00a000">y</text><text x="52" y="382" fill="#c80000">x</text><text x="26" y="382" fill="#0000d0">z</text></g>
          <path d="M26.500 357V382" stroke="#00a000" /><path d="M31 381.500H53" stroke="#c80000" />
          <text class="vl" x="5" y="222" textLength="20">[ + ]</text><text class="vl" x="27.500" y="222" textLength="152.500">[Top ] [Standard ] [Wireframe ]</text>
          <circle cx="416.500" cy="259.500" r="26.500" fill="none" stroke="#515459" stroke-width="1.500" /><circle cx="416.500" cy="259.500" r="30" fill="none" stroke="#7f8287" stroke-width="5.500" />
          <path d="M401.500 244.500h30v30h-30z" fill="#8b8b8b" stroke="#777" /><path d="M407 250h19v19h-19z" fill="#80838a" />
          <g class="cmp"><text x="416.500" y="232">N</text><text x="416.500" y="298">S</text><text x="384" y="264">W</text><text x="449.500" y="264">E</text></g><text class="cb" x="416.500" y="262">TOP</text>
        </svg>
        <svg class="vp" width="474" height="204" viewBox="477 205 474 204">
          <g fill="none" shape-rendering="crispEdges"><path :d="frontGrid" stroke="#fff" /><path d="M678.500 267V319" stroke="#0000c0" /><path d="M679 305.500H711" stroke="#0000c0" /><path d="M711.500 306V338" stroke="#d00000" /><path d="M647 338.500H698" stroke="#700000" /><path d="M698 338.500H752" stroke="#c80000" /><path d="M670.500 330.500h15v15h-15z" stroke="#ff0" /><path d="M503.500 357V381" stroke="#0000c0" /><path d="M508 381.500H530" stroke="#c80000" /></g>
          <path d="M678 240L673 266H683z" fill="#0000c8" /><path d="M751 334L776 339 751 343z" fill="#c80000" />
          <g class="ax"><text x="677" y="238" fill="#0000d0">z</text><text x="778" y="338" fill="#c80000">x</text><text x="503" y="357" fill="#0000d0">z</text><text x="529" y="382" fill="#c80000">x</text><text x="503" y="382" fill="#00a000">y</text></g>
          <text class="vl" x="482" y="222" textLength="20">[ + ]</text><text class="vl" x="504.500" y="222" textLength="161.500">[Front ] [Standard ] [Wireframe ]</text>
          <ellipse cx="893" cy="276" rx="37" ry="2.500" fill="#303030" stroke="#85888b" stroke-width="1.300" /><path d="M853 275.500h3M930 275.500h3" stroke="#85888b" /><path d="M879.500 244.500h30v30h-30z" fill="#858585" stroke="#777" /><path d="M885 250h19v19h-19z" fill="#7b7e82" /><text class="cb" x="894.500" y="262">FRONT</text>
        </svg>
        <svg class="vp" width="471" height="207" viewBox="1 413 471 207">
          <g fill="none" shape-rendering="crispEdges"><path :d="worldX.map(x => `M${x} 415V618`).join('') + worldY.map(y => `M2 ${y}H471`).join('')" stroke="#5b5b5b" /><path d="M2 542.500H471" stroke="#000" /><path :d="leftGrid" stroke="#fff" /><path d="M195.500 438V491M163 477.500H195" stroke="#0000c0" /><path d="M162.500 478V510M122 510.500H176" stroke="#00a000" /><path d="M176 510.500H220" stroke="#800000" /><path d="M187.500 502.500h15v15h-15z" stroke="#ff0" /><path d="M26.500 568V593" stroke="#0000d0" /><path d="M7 592.500H26" stroke="#00a000" /></g>
          <path d="M195.500 415L191 438H200z" fill="#0000c8" /><path d="M100 510L123 506V515z" fill="#00a000" />
          <g class="ax"><text x="94" y="511" fill="#00a000">y</text><text x="26" y="568" fill="#0000d0">z</text><text x="2" y="593" fill="#00a000">y</text><text x="26" y="594" fill="#c80000">x</text></g>
          <text class="vl" x="5" y="432" textLength="20">[ + ]</text><text class="vl" x="27.500" y="432" textLength="154.500">[Left ] [Standard ] [Wireframe ]</text>
          <ellipse cx="416" cy="486" rx="37" ry="2.500" fill="#303030" stroke="#85888b" stroke-width="1.300" /><path d="M401.500 454.500h30v30h-30z" fill="#858585" stroke="#777" /><path d="M407 460h19v19h-19z" fill="#7b7e82" /><path d="M413.500 454V485" stroke="#999" /><text class="cb" x="416.500" y="472">LEFT</text>
        </svg>
        <svg class="vp persp" width="474" height="207" viewBox="477 413 474 207">
          <defs><linearGradient id="pg" x2="0" y2="1"><stop offset="0" stop-color="#1b1b1b" /><stop offset=".5" stop-color="#373737" /><stop offset="1" stop-color="#484848" /></linearGradient></defs>
          <rect x="478" y="414" width="472" height="205" fill="url(#pg)" stroke="#816a24" stroke-width="2" />
          <g transform="translate(475 410) scale(.33333)" fill="none" stroke-width="3">
            <path d="M722 530L789 355 781 408 722 600z" fill="#58708a" /><path :d="sideMesh" stroke="#fff" stroke-dasharray="9 3" /><path d="M722 530V600L781 408 789 355" stroke="#fff" />
            <path d="M416 431L722 530V600L446 506z" fill="#000" /><path :d="frontMesh" stroke="#fff" stroke-dasharray="8 2" />
            <path d="M493 262L789 355 722 530 416 431z" fill="#a9cdf8" /><path :d="topMesh" stroke="#fff" />
            <path d="M530 308L724 370 685 484 483 416z" fill="#a9cdf8" /><path d="M530 308L724 370 708 412 541 360z" fill="#000" /><path :d="backMesh" stroke="#eee" />
            <path d="M530 308L541 360 513 428 483 416z" fill="#54687d" /><path :d="leftMesh" stroke="#dce8f2" stroke-width="2" stroke-dasharray="7 3" />
            <path d="M541 360L708 412 685 484 513 428z" fill="#ff7f8a" /><path :d="floorMesh" stroke="#c80000" />
            <path d="M634 391L647 360 710 225M644 320V359L737 388" stroke="#00a000" /><path d="M607 420L603 365M607 408L704 438M607 408L642 322" stroke="#0000d0" /><path d="M737 388L705 474M704 438V474L615 445M705 474L820 514" stroke="#c80000" />
            <path d="M592 322L609 345Q615 366 601 367 580 365 582 345z" fill="#0000c8" /><path d="M711 202L673 256Q685 274 699 263z" fill="#00a000" /><path d="M820 502L892 538 816 527z" fill="#c80000" />
            <path d="M586 421.500h46v45h-46z" stroke="#ff0" shape-rendering="crispEdges" /><path d="M86 549V517" stroke="#0000d0" /><path d="M86 549L112 488" stroke="#00a000" /><path d="M86 549L160 569" stroke="#c80000" />
          </g>
          <g class="ax"><text x="711" y="476" fill="#00a000">y</text><text x="774" y="591" fill="#c80000">x</text><text x="672" y="514" fill="#0000d0">z</text><text x="503" y="583" fill="#0000d0">z</text><text x="512" y="571" fill="#00a000">y</text><text x="528" y="600" fill="#c80000">x</text></g>
          <text class="vl" x="482" y="432" textLength="20">[ + ]</text><text class="vl" x="504.500" y="432" textLength="201.500">[Perspective ] [Standard ] [Edged Faces ]</text>
          <ellipse cx="894.500" cy="478" rx="27" ry="24.500" fill="#303030" stroke="#5a5d60" stroke-width="2" /><ellipse cx="894.500" cy="478" rx="31" ry="28.500" fill="none" stroke="#7f8287" stroke-width="5" />
          <path d="M884 449Q885 447 887 447L911 454Q913 455 912 458L905 488Q904 490 902 490L878 482Q876 480 877 477z" fill="#858585" /><path d="M881 469l19 4-2 7-18-5z" fill="#77797d" />
          <g class="cmp"><text x="904" y="453" transform="rotate(15 904 449)">N</text><text x="865" y="470" transform="rotate(15 865 466)">W</text><text x="926" y="491" transform="rotate(10 926 487)">E</text><text x="882" y="511" transform="rotate(8 882 507)">S</text></g><text class="cb" x="895" y="466" transform="rotate(8 895 463)">TOP</text><text class="cb tiny" x="890" y="484" transform="rotate(13 889 482)">FRONT</text>
        </svg>
      </div>

      <aside class="panel">
        <div class="dots"></div>
        <div class="ptabs"><b v-for="(n, i) in ['plus', 'modify', 'hier', 'motion', 'display', 'utils']" :key="n" :class="{ act: i === 1 }"><Ic :n="n" s="20" /></b></div>
        <div class="pcols">
          <div class="left">
            <div class="name"><span class="field">Box014</span><i class="sw"></i></div>
            <div class="mlist">Modifier List<i class="tri"></i></div>
            <div class="mods"><b>Edit Poly</b><b>TurboSmooth</b><b class="off">Extrude</b><b>Symmetry</b><b>Shell</b><b class="off">Bevel</b></div>
            <div class="stack">
              <ul><li><Ic n="eyes" s="16" /><i class="tri"></i><span>Edit Poly</span><i class="chk"></i></li><li v-for="n in ['Vertex', 'Edge', 'Border', 'Polygon']" :key="n" class="sub" :class="{ sel: n === 'Polygon' }"><i class="ln"></i><span>{{ n }}<i v-if="n === 'Polygon'" class="chk"></i></span></li></ul>
              <div class="sb"><svg width="16" height="84" viewBox="0 0 16 84"><path d="M0 0H16V84H0z" fill="#f0f0f0" /><path d="M1 17H16V46H1z" fill="#cdcdcd" /><path d="M4 11L8 7 12 11M4 74L8 78 12 74" fill="none" stroke="#505050" stroke-width="2" /></svg></div>
            </div>
            <div class="sicons"><Ic n="pin" s="18" /><i></i><Ic n="tube" s="18" /><i></i><Ic n="unique" s="18" /><Ic n="trash" s="18" class="tr" /><i></i><Ic n="config" s="18" /></div>
            <div class="split"><i></i></div>
            <div class="lower"><div class="roll epm"><h4><i class="tri"></i>Edit Poly Mode<i class="dr"></i></h4>
              <div class="radios"><i class="rd on"></i>Model<i class="rd two"></i>Animate</div><div class="noop">&lt;No Current Operation&gt;</div>
              <b class="pb off commit">Commit</b><div class="cut"><b class="pb off">Settings</b><b class="pb off">Cancel</b></div></div><i class="scr"></i></div>
          </div>
          <div class="right">
            <div class="roll sel1"><h4><i class="tri"></i>Selection<i class="dr"></i></h4>
              <div class="subs"><b v-for="n in ['vtx', 'edge', 'border', 'poly', 'element']" :key="n" :class="{ on: n === 'poly' }"><Ic :n="n" s="18" /></b></div>
              <label class="ck"><i></i>Use Stack Selection</label><label class="ck">
                <i></i>By Vertex</label><label class="ck">
                <i></i>Ignore Backfacing</label><label class="ck"><i></i>By Angle:<span class="ang">45,0<svg width="5" height="9" viewBox="0 0 5 9"><path d="M2.500 0L5 3.500H0zM0 5.500H5L2.500 9z" fill="#8a8a8a" /></svg></span></label>
              <div class="bl r1"><b class="pb w70">Shrink</b><b class="pb w70">Grow</b></div>
              <div class="bl r2"><b class="pb off w59">Ring</b><i class="ud"></i><b class="pb off w55">Loop</b><i class="ud"></i></div>
              <b class="pb w147">Get Stack Selection</b>
              <fieldset><legend>Preview Selection</legend><i class="rd on"></i><span class="q1">Off</span><i class="rd"></i><span class="q2">SubObj</span><i class="rd"></i><span>Multi</span></fieldset>
              <div class="cnt">16 Polygons Selected</div>
            </div>
            <div class="roll sel2"><h4><i class="tri"></i>Edit Polygons<i class="dr"></i></h4>
              <b class="pb w147">Insert Vertex</b>
              <div class="bl"><b class="pb w55">Extrude</b><b class="mn"><Ic n="mini" s="14" /></b><b class="pb w55">Outline</b><b class="mn"><Ic n="mini" s="14" /></b></div>
              <div class="bl"><b class="pb w55">Bevel</b><b class="mn"><Ic n="mini" s="14" /></b><b class="pb w55">Inset</b><b class="mn"><Ic n="mini" s="14" /></b></div>
            </div>
          </div>
          <i class="scr big"></i>
        </div>
      </aside>
    </main>

    <div class="slider"><b class="ar">&lt;</b><b class="sl">0 / 100</b><b class="ar">&gt;</b></div>
    <div class="track"><Ic n="trackc" s="20" />
      <svg width="1307" height="26" viewBox="59 646 1307 26"><rect x="59" y="646" width="1307" height="26" fill="#2d2d2d" /><path d="M61.500 646h8v25h-8z" fill="#8b7c1c" stroke="#6f6216" />
        <path v-for="i in ticks" :key="i" :d="`M${tx(i)} 646V${i % 5 ? 658 : 671}`" :stroke="i ? '#666' : '#c9b93c'" />
        <g class="tk"><text v-for="i in 21" :key="i" :x="tx((i - 1) * 5) - .5" y="669" :fill="i === 1 ? '#e2d253' : '#b9b9b9'">{{ (i - 1) * 5 }}</text></g></svg>
    </div>

    <footer class="status">
      <div class="script"><i></i><span>MAXScript Min</span></div>
      <div class="msg"><span>1 Object Selected</span><span>Click or click-and-drag to select objects</span></div>
      <div class="coords">
        <div class="c1"><Ic n="isolate" s="18" /><Ic n="lock" s="18" /><Ic n="xform" s="18" /><template v-for="c in [['X:', '1073,294'], ['Y:', '134,359'], ['Z:', '15,0']]" :key="c[0]"><label>{{ c[0] }}</label><span class="nf">{{ c[1] }}<svg width="5" height="9" viewBox="0 0 5 9"><path d="M2.500 0L5 3.500H0zM0 5.500H5L2.500 9z" fill="#ccc" /></svg></span></template><em>Grid = 10,0</em></div>
        <div class="c2"><b class="tagb"><Ic n="tag" s="18" /></b>Add Time Tag</div>
      </div>
      <div class="play"><div class="pr"><Ic v-for="n in ['pfirst', 'pprev', 'play', 'pnext', 'plast']" :key="n" :n="n" s="18" /></div><div class="pr2"><Ic n="keymode" s="18" /><span class="nf">0<svg width="5" height="9" viewBox="0 0 5 9"><path d="M2.500 0L5 3.500H0zM0 5.500H5L2.500 9z" fill="#ccc" /></svg></span><Ic n="timecfg" s="18" /></div></div>
      <b class="bigk"><Ic n="bigkey" s="38" /></b>
      <div class="keys"><b class="pb">Auto Key</b><b class="pb">Set Key</b></div>
      <div class="kf"><div class="kd">Selected<i class="tri"></i></div><div class="kr"><Ic n="figure" s="18" /><b class="pb">Key Filters...</b></div></div>
      <div class="nav"><Ic v-for="n in ['zoom', 'zoomall', 'extents', 'extall', 'fov', 'hand', 'orbit', 'maxi']" :key="n" :n="n" s="18" /></div>
    </footer>

    <div class="taskbar">
      <b class="st"><Ic n="win" s="20" /></b>
      <div class="search"><Ic n="cortana" s="24" /><span>Scrivi qui per eseguire la ricerca</span><Ic n="mic" s="20" /></div>
      <b v-for="n in ['task', 'calc', 'edgeb', 'explorer', 'mail', 'spotify', 'github', 'max']" :key="n" class="tb" :class="[n, { run: !['task', 'calc'].includes(n) }]"><Ic :n="n" s="28" /></b>
      <div class="tray"><Ic n="people" s="20" class="i1" /><Ic n="chev" s="20" class="i2" /><Ic n="batt" s="20" class="i3" /><Ic n="wifi" s="20" class="i4" /><Ic n="vol" s="20" class="i5" /><div class="clock"><span>16:51</span><span>26/01/2018</span></div><Ic n="notif" s="20" /></div>
    </div>
  </div>
</template>

<style>
body { background: #444; overflow: hidden; }
</style>

<style scoped>
.app { width: 1366px; height: 768px; overflow: hidden; background: #444; font: 12px/16px "Open Sans", "Noto Sans", sans-serif; letter-spacing: -.35px; color: #ddd; display: flex; flex-direction: column; }
.app * { box-sizing: border-box; }
.app > * { flex: none; }
i, em { font-style: normal; }
b { font-weight: 400; }
p { margin: 0; }
.ic { flex: none; display: block; overflow: visible; }
.tri { display: inline-block; width: 0; height: 0; border: 3.5px solid transparent; border-top: 5px solid #ccc; border-bottom: 0; flex: none; }
.tri.dark { border-width: 5px 5px 0; border-top-color: #000; }
.tri.sm { border-width: 3px 3px 0; }
.tri.lt { border-top-color: #e8e8e8; }
.tri.big { border-width: 4px 4px 0; border-top-color: #e8e8e8; vertical-align: 2px; margin-left: 3px; }

.title { height: 23px; background: #fff; color: #111; display: flex; align-items: center; padding-left: 2px; }
.title span { margin-left: 5px; flex: 1; letter-spacing: -.43px; }
.winbtn { margin-right: 16px; }

.menu { height: 23px; background: linear-gradient(#525252, #414141); border-bottom: 1px solid #1c1c1c; display: flex; align-items: center; padding-left: 12px; color: #eee; }
.menu > span { flex: none; white-space: nowrap; line-height: 20px; height: 22px; }
.more { width: 9px; height: 22px; line-height: 20px; margin-left: 49px; background: #606060; border-radius: 2px; font-weight: 700; text-align: center; }
.sign { width: 120px; height: 22px; margin-left: 5px; background: #d2d2d2; color: #111; display: flex; align-items: center; padding: 0 4px; font: 12px "Liberation Sans", sans-serif; letter-spacing: 0; }
.sign span { flex: 1; margin-left: 4px; }
.menu label { margin-left: 19px; width: 67px; color: #ccc; letter-spacing: -.5px; padding-top: 2px; }
.ws { flex: 1; height: 21px; margin-right: 3px; background: #606060; color: #ccc; display: flex; align-items: center; justify-content: space-between; padding: 2px 7px 0 4px; letter-spacing: -.5px; }

.toolbar { height: 33px; background: #444; display: flex; align-items: center; }
.grip { width: 4px; height: 26px; margin: 0 2px 0 3px; flex: none; background: conic-gradient(#8d8d8d 25%, transparent 0) 0 0 / 2px 2px; }
.cell { height: 30px; flex: none; display: flex; align-items: center; justify-content: center; }
.cell.on { background: #5f89c1; border-radius: 3px; }
.sep { width: 1px; height: 16px; background: #111; }
.dd { height: 19px; width: 100%; align-self: flex-start; margin-top: 4px; background: #636363; display: flex; align-items: center; justify-content: space-between; padding: 0 7px 0 5px; font-size: 11px; white-space: nowrap; }

.ribbon { height: 126px; display: flex; }
.ribbon .tall { height: 115px; margin-top: 3px; }
.rmain { flex: 1; height: 119px; border-top: 1px solid #6a6a6a; border-left: 1px solid #666; background: #505050; border-bottom: 1px solid #2b2b2b; }
.tabs { height: 20px; display: flex; align-items: center; color: #a2a2a2; border-bottom: 1px solid #2c2c2c; text-align: center; line-height: 18px; }
.tabs span { flex: none; letter-spacing: 0; }
.t1 { width: 99px; } .t2 { width: 64px; }
.tabs .t3 { width: 90px; margin-left: 15px; height: 20px; margin-bottom: -1px; background: linear-gradient(#6d6d6d, #606060); color: #eee; border: 1px solid #333; border-bottom: 0; letter-spacing: -.25px; }
.t4 { width: 112px; } .t5 { width: 88px; }
.collapse { width: 13px; height: 8px; background: #eee; border-radius: 2px; margin-left: 12px; margin-right: 6px; display: grid; place-items: center; }
.collapse i { border: 3px solid transparent; border-top: 0; border-bottom: 3px solid #333; }
.groups { height: 98px; display: flex; padding: 0 0 0 1px; background: linear-gradient(90deg, #3e3e3e, #3e3e3e); }
.grp { flex: none; height: 97px; background: #5d5d5d; border-right: 1px solid #383838; border-left: 1px solid #666; display: flex; flex-direction: column; color: #e2e2e2; white-space: nowrap; }
.grp footer { height: 17px; line-height: 17px; background: #484848; text-align: center; margin-bottom: 1px; letter-spacing: -.25px; }
.body { flex: 1; min-height: 0; }
.rows, .col { display: flex; flex-direction: column; }
.rows p, .col p { display: flex; align-items: center; }
.cols { display: flex; align-items: flex-start; }
.g1 { width: 101px; } .g1 .rows { padding: 4px 0 0 4px; } .g1 p { height: 24px; } .g1 p span { margin: 0 8px 0 3px; }
.g2 { width: 141px; } .store { display: grid; grid-template-columns: 41px 54px 40px; grid-template-rows: 20px 24px 24px; padding: 5px 0 0 2px; align-content: start; } .store span { padding-left: 3px; } .store em { text-align: center; line-height: 22px; margin: 1px 2px 0 0; } .pl { padding-left: 4px; }
.btn { height: 22px; background: linear-gradient(#6a6a6a, #4f4f4f); border: 1px solid #2f2f2f; display: flex; align-items: center; justify-content: center; flex: none; }
.btn.sq { width: 24px; }
.btn.blue { background: linear-gradient(#7fa3d8, #56709b); border-color: #27406b; }
.g3 { width: 68px; } .g3 .rows { padding: 16px 0 0 7px; } .g3 p { height: 24px; } .g3 p span { margin-left: 4px; }
.g4 { width: 95px; } .g4 .rows { padding: 20px 0 0 7px; } .g4 p { height: 20px; } .g4 p span { margin: 0 8px 0 5px; } .g4 .s60 { margin: 4px 0 0 4px; }
.spin { display: inline-flex; height: 16px; border: 1px solid #2e2e2e; background: #5f5f5f; flex: none; }
.spin :deep(.val) { flex: 1; line-height: 13px; padding-left: 2px; font-size: 11.5px; }
.spin :deep(svg) { margin: -1px -1px 0 0; }
.s60 { width: 60px; } .s50 { width: 50px; } .s40 { width: 40px; } .s43 { width: 43px; } .s46 { width: 46px; }
.g5 { width: 122px; } .g5 .rows { padding: 20px 0 0 18px; } .g5 p + p { margin-top: 2px; } .g5 .sq { margin-left: 4px; } .lab { width: 40px; }
.axes { display: flex; }
.axes :deep(b) { width: 24px; height: 22px; border: 1px solid #2f2f2f; background: linear-gradient(#6a6a6a, #4f4f4f); font: 600 18px/20px "Open Sans", sans-serif; color: #b9b4ac; text-align: center; text-shadow: 1px 1px #222; letter-spacing: 0; }
.axes :deep(b.on) { background: linear-gradient(#7fa3d8, #56709b); border-color: #27406b; color: #cfcac2; }
.g6 { width: 121px; } .g6 .cols { padding: 20px 0 0 2px; } .g6 .col { width: 85px; } .g6 p + p { margin: 5px 0 0 3px; } .out { margin-left: 6px; }
.vs { width: 1px; height: 44px; background: #3a3a3a; flex: none; }
.cur { margin: 9px 0 0 5px; }
.g7 { width: 138px; } .g7 .cols { padding: 17px 0 0 3px; } .pair { display: flex; flex-direction: column; gap: 2px; } .pc { font: 700 15px "Open Sans"; color: #ccc; text-shadow: 1px 1px #111; }
.sp2 { display: flex; flex-direction: column; gap: 2px; margin: 6px 3px 0 1px; } .cdrop { margin: 6px 3px 0 3px; } .btn.half { height: 13px; margin-top: -1px; } .g7 .pair:last-child { margin-left: 4px; }
.g8 { width: 126px; } .g8 .cols { padding: 17px 0 0 3px; } .g8 .col { width: 90px; } .g8 p { margin: 4px 0 0 3px; } .g8 p span { margin-left: 4px; } .g8 .cur, .g12 .cur { margin-top: 12px; margin-left: 4px; } .g12 .cur { margin-top: 9px; }
.mid { display: flex; flex-direction: column; align-items: center; padding-top: 15px; line-height: 17px; } .mid span:first-child { margin-left: -3px; } .mid .spin { margin: 1px 0 0 6px; line-height: normal; }
.g9 { width: 83px; } .g10 { width: 94px; }
.g11 { width: 87px; } .g11 .rows { padding: 20px 0 0 6px; } .g11 .axes { margin-top: 1px; }
.g12 { width: 120px; } .g12 .cols { padding: 20px 0 0 3px; } .g12 .col { width: 84px; } .g12 p + p { margin-top: 2px; } .sd { width: 33px; }

.work { height: 416px; display: flex; }
.views { width: 955px; display: grid; grid-template-columns: 471px 474px; column-gap: 5px; row-gap: 4px; padding-left: 1px; align-content: start; }
.vp { display: block; background: #343434; }
.vl { font-size: 11.5px; fill: #c8c8c8; letter-spacing: 0; }
.ax { font: 11px "DejaVu Sans", sans-serif; letter-spacing: 0; }
.cmp { font: 700 13px "Liberation Sans", sans-serif; fill: #b4b6b9; text-anchor: middle; letter-spacing: 0; }
.cb { font: 700 7px "Liberation Sans", sans-serif; fill: #5c5f67; text-anchor: middle; letter-spacing: -.1px; }
.tiny { font-size: 5px; }

.panel { width: 411px; color: #e8e8e8; font-size: 11px; letter-spacing: -.3px; }
.dots { height: 4px; margin: 0 2px 3px 3px; background: conic-gradient(#8d8d8d 25%, transparent 0) 0 0 / 2px 2px; }
.ptabs { height: 26px; display: flex; gap: 1px; }
.ptabs b { width: 31px; background: #3a3a3a; border-radius: 3px 3px 0 0; display: grid; place-items: center; border-bottom: 1px solid #333; padding-top: 2px; }
.ptabs .act { background: #484848; border: 0; }
.pcols { height: 378px; display: flex; border-top: 1px solid #383838; border-left: 1px solid #383838; border-bottom: 1px solid #383838; padding-top: 3px; overflow: hidden; }
.left { width: 206px; padding-left: 5px; }
.name { display: flex; padding-top: 5px; }
.field { width: 175px; height: 18px; line-height: 18px; background: #646464; padding-left: 2px; color: #ccc; }
.sw { width: 16px; height: 19px; margin-left: 6px; margin-top: -1px; background: linear-gradient(#000 50%, #fff 50%); }
.mlist { width: 199px; height: 20px; margin-top: 11px; background: #646464; display: flex; align-items: center; justify-content: space-between; padding: 0 7px 0 2px; color: #ddd; }
.mods { display: grid; grid-template-columns: 94px 94px; column-gap: 6px; grid-auto-rows: 18px; row-gap: 4.5px; padding: 12px 0 0 2px; }
.mods b, .pb { height: 18px; line-height: 18px; background: #646464; border-radius: 3px; text-align: center; color: #ddd; display: block; box-shadow: 0 0 0 1px #4b4b4b; flex: none; }
.mods .off, .pb.off { background: #595959; color: #8d8d8d; }
.stack { width: 201px; height: 88px; margin: 9px 0 0 -1px; border: 2px solid #f0f0f0; display: flex; background: #434343; }
.stack ul { list-style: none; margin: 0; padding: 0; flex: 1; overflow: hidden; }
.stack li { height: 17px; display: flex; align-items: center; color: #f2f2f2; }
.stack li > .ic { margin: 0 0 0 4px; } .stack li > .tri { margin: 0 7px 0 6px; border-width: 5px 4px 0; } .stack li > span { flex: 1; }
.chk { width: 10px; height: 10px; background: #d4d4d4; margin-right: 8px; flex: none; outline: 1px solid #555; }
.sub .ln { width: 20px; height: 17px; margin-left: 30px; border-left: 1px dotted #111; background: repeating-linear-gradient(90deg, #111 0 1px, transparent 1px 2px) 0 8px / 16px 1px no-repeat; }
.sub span { display: flex; align-items: center; justify-content: space-between; height: 17px; padding-left: 1px; }
.sel span { background: #5f89c1; }
.sicons { height: 18px; margin-top: 8px; display: flex; align-items: center; padding-left: 2px; }
.sicons i { width: 1px; height: 16px; background: #111; margin: 0 8.500px; }
.sicons .tr { margin-left: 6px; }
.split { height: 1px; background: #666; margin: 19px 5px 0 4px; display: flex; justify-content: center; }
.split i { width: 20px; height: 5px; margin-top: -2px; border: solid #444; border-width: 1px 3px 0; background: conic-gradient(#ccc 25%, #444 0) 0 0 / 2px 2px; flex: none; }
.lower { display: flex; margin-top: 6px; gap: 3px; margin-left: -1px; }
.roll { background: #515151; border: 1px solid #3e3e3e; border-radius: 3px; overflow: hidden; }
.epm { width: 193px; height: 98px; }
h4 { margin: 0; height: 20px; display: flex; align-items: center; font-size: 12px; line-height: 20px; color: #fff; padding-left: 5px; }
h4 .tri { border-width: 4px 3px 0; margin-right: 7px; }
.dr { width: 6px; height: 6px; margin-left: auto; margin-right: 7px; margin-top: -3px; background: conic-gradient(#999 25%, transparent 0) 0 0 / 2px 2px; }
.radios { display: flex; align-items: center; padding-left: 27px; height: 16px; margin-top: 4px; }
.rd { width: 11px; height: 11px; border-radius: 6px; background: #636363; border: 1px solid #484848; margin-right: 6px; flex: none; }
.rd.on { background: #e2e2e2; border: 2.5px solid #5b5b5b; } .rd.two { margin-left: 26px; }
.noop { text-align: center; padding-right: 2px; margin-top: 2px; letter-spacing: -.25px; }
.commit { width: 63px; margin: 4px 0 0 63px; }
.cut { display: flex; gap: 10px; margin: 7px 0 0 27px; } .cut .pb { width: 64px; }
.scr { width: 5px; height: 74px; border: 1px solid #5a5a5a; border-radius: 3px; background: #4a4a4a; box-shadow: 0 24px #3a3a3a; }
.scr.big { height: 121px; margin-left: 3px; box-shadow: 0 120px #3a3a3a, 0 240px #3a3a3a, 0 252px #3a3a3a; }
.right { width: 192px; }
.sel1 { height: 277px; } .sel2 { height: 96px; margin-top: 3px; } .sel2 .w147 { margin-top: 8px; }
.subs { display: flex; padding: 1px 0 0 31px; height: 28px; } .subs b { width: 24px; height: 21px; display: grid; place-items: center; margin-top: 1px; } .subs .on { background: #5f89c1; border-radius: 2px; }
.ck { display: flex; align-items: center; height: 19.500px; padding-left: 23px; } .ck > i { width: 11px; height: 11px; background: #616161; margin-right: 2px; border: 1px solid #4a4a4a; }
.ang { width: 80px; height: 15px; margin-left: 8px; border: 1px solid #454545; background: #555; color: #909090; line-height: 13px; display: flex; justify-content: space-between; align-items: center; padding: 0 3px; }
.bl { display: flex; width: 150px; margin: 6px 0 0 20px; } .r1 { margin-top: 3px; } .r1 .pb + .pb { margin-left: 7px; } .r2 { margin-top: 7px; }
.pb.w70 { width: 70px; height: 16px; line-height: 17px; } .w59 { width: 59px; } .w55 { width: 55px; } .bl.r2 .pb { height: 16px; line-height: 17px; }
.ud { width: 11px; height: 14px; margin: 0 4px; flex: none; background: #666; display: grid; place-items: center; } .ud::after { content: ""; width: 5px; height: 9px; background: #ddd; clip-path: polygon(50% 0, 100% 38%, 0 38%, 0 62%, 100% 62%, 50% 100%, 0 62%, 0 38%); }
.w147 { width: 147px; margin: 6px 0 0 20px; } .pb.w147 { height: 16px; line-height: 17px; }
fieldset { border: 1px solid #2e2e2e; border-radius: 3px; margin: 6px 18px 0 14px; padding: 5px 0 0 2px; height: 38px; display: flex; align-items: flex-start; } legend { padding: 0 2px; margin-left: 1px; line-height: 12px; }
.q1 { width: 32px; } .q2 { width: 44px; } fieldset .rd { margin-top: 3px; } fieldset .rd.on { margin-top: 2px; }
.cnt { text-align: right; padding: 3px 22px 0 0; letter-spacing: -.25px; }
.mn { width: 13px; height: 16px; margin-left: 2px; background: #636363; border-radius: 2px; display: grid; place-items: center; flex: none; } .mn + .pb { margin-left: 7px; } .sel2 .bl .w55 { height: 16px; line-height: 17px; } .sel2 .bl + .bl { margin-top: 7px; }

.slider { height: 25px; padding: 4px 0 0 10px; display: flex; gap: 2px; border-bottom: 1px solid #1f1f1f; font-size: 11.500px; background: conic-gradient(#8d8d8d 25%, transparent 0) 2px 6px / 4px 2px repeat-y; }
.slider b { height: 16px; line-height: 17px; background: #636363; border-radius: 2px; text-align: center; } .ar { width: 14px; } .sl { width: 123px; letter-spacing: 0; }
.track { height: 26px; display: flex; align-items: center; padding-left: 20px; background: conic-gradient(#8d8d8d 25%, transparent 0) 2px 0 / 4px 2px repeat-y; } .track .ic { margin-right: 19px; }
.tk { font-size: 11px; text-anchor: middle; letter-spacing: 0; }
.status { height: 56px; display: flex; font-size: 11px; color: #e4e4e4; white-space: nowrap; }
.script { width: 107px; padding: 5px 2px 0 4px; border-right: 2px solid #1c1c1c; } .script i, .script span { display: block; height: 22px; border: 1px solid #fff; border-top-color: #888; border-left-color: #888; background: #dbc3c3; margin-bottom: 1px; width: 98px; } .script span { background: #fff; color: #888; font: 12.500px/20px "Liberation Mono", monospace; letter-spacing: -.5px; padding-left: 5px; overflow: hidden; border-right: 5px solid #fff; }
.msg { width: 359px; padding: 10px 0 0 5px; display: flex; flex-direction: column; gap: 9px; letter-spacing: -.1px; } .msg span + span { letter-spacing: -.28px; }
.coords { width: 443px; padding-top: 9px; } .c1 { display: flex; align-items: center; padding-left: 3px; height: 18px; } .c1 .ic { margin-right: 9px; } .c1 label { width: 13px; margin-left: 3px; margin-right: 0; } .c1 .ic + label { margin-left: -3px; width: 13px; }
.nf { width: 68px; height: 17px; background: #646464; display: inline-flex; align-items: center; justify-content: space-between; padding: 0 3px 0 4px; border: 1px solid #505050; letter-spacing: 0; }
.c1 em { margin-left: 5px; } .c2 { display: flex; align-items: center; padding: 6px 0 0 310px; } .tagb { width: 21px; height: 19px; background: #5f89c1; border-radius: 2px; display: grid; place-items: center; margin-right: 5px; }
.play { width: 124px; } .pr { display: flex; gap: 6.500px; padding: 8px 0 0 4px; } .pr2 { display: flex; align-items: center; padding: 4px 0 0 4px; gap: 6px; }
.bigk { width: 42px; height: 41px; margin: 8px 5px 0 10px; background: #606060; border-radius: 3px; display: grid; place-items: center; }
.keys { width: 47px; padding-top: 9px; display: flex; flex-direction: column; gap: 6px; } .keys .pb { height: 16px; line-height: 17px; }
.kf { width: 112px; margin-left: 5px; padding-top: 8px; } .kd { height: 18px; background: #646464; display: flex; align-items: center; justify-content: space-between; padding: 0 5px 0 4px; } .kr { display: flex; margin-top: 5px; gap: 9px; } .kr .pb { flex: 1; line-height: 19px; }
.nav { display: grid; grid-template-columns: repeat(4, 18px); gap: 5px; padding: 8px 0 0 12px; align-content: start; }

.taskbar { height: 40px; background: #000; display: flex; color: #fff; }
.st { width: 48px; display: grid; place-items: center; } .search { width: 344px; background: #f1f1f1; color: #333; display: flex; align-items: center; padding: 2px 10px 0 8px; font-size: 14.500px; letter-spacing: -.1px; } .search span { flex: 1; margin-left: 8px; }
.tb { width: 49px; height: 40px; display: grid; place-items: center; } .task { width: 49px; } .calc { width: 50px; }
.run { background: linear-gradient(#76b9ed, #76b9ed) center bottom / 41px 2px no-repeat; } .tb.max { background: linear-gradient(#76b9ed, #76b9ed) center bottom / 49px 2px no-repeat, #333; }
.tray { margin-left: auto; width: 253px; display: flex; align-items: center; } .i1 { margin-right: 16px; } .i2 { margin-right: 4px; } .i3 { margin-right: 4px; } .i4 { margin-right: 3px; }
.clock { width: 74px; text-align: center; display: flex; flex-direction: column; line-height: 18px; font-size: 12px; margin-right: 10px; letter-spacing: -.4px; }
</style>
